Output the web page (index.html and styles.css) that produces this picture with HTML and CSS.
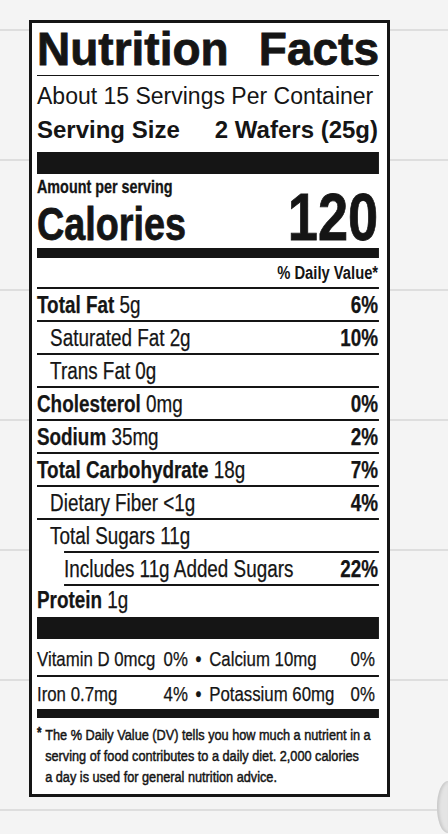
FILE: index.html
```html
<!DOCTYPE html>
<html lang="en">
<head>
    <meta charset="UTF-8">
    <meta name="viewport" content="width=device-width, initial-scale=1.0">
    <title>Nutrition Facts</title>
    <link rel="stylesheet" href="styles.css">
</head>
<body>
    <div class="label">
        <h1 class="title">Nutrition Facts</h1>
        <div class="servings">About 15 Servings Per Container</div>
        <div class="serving-size">
            <span>Serving Size</span>
            <span>2 Wafers (25g)</span>
        </div>

        <!-- condensed part of the label -->
        <div class="facts">
            <div class="bar bar-thick"></div>

            <div class="cal-block">
                <div class="cal-left">
                    <div class="amount">Amount per serving</div>
                    <div class="cal-label">Calories</div>
                </div>
                <div class="cal-value">120</div>
            </div>
            <div class="bar bar-medium"></div>

            <div class="dv-head">% Daily Value*</div>

            <div class="row"><span><b>Total Fat</b> 5g</span><b>6%</b></div>
            <div class="row sub"><span>Saturated Fat 2g</span><b>10%</b></div>
            <div class="row sub"><span>Trans Fat 0g</span></div>
            <div class="row"><span><b>Cholesterol</b> 0mg</span><b>0%</b></div>
            <div class="row"><span><b>Sodium</b> 35mg</span><b>2%</b></div>
            <div class="row"><span><b>Total Carbohydrate</b> 18g</span><b>7%</b></div>
            <div class="row sub"><span>Dietary Fiber &lt;1g</span><b>4%</b></div>
            <div class="row sub no-line"><span>Total Sugars 11g</span></div>
            <div class="row added"><span>Includes 11g Added Sugars</span><b>22%</b></div>
            <div class="row protein"><span><b>Protein</b> 1g</span></div>
            <div class="bar bar-thick"></div>

            <div class="vit-row first">
                <div class="vit-cell vit-left"><span>Vitamin D 0mcg</span><span>0%</span></div>
                <span class="dot">&bull;</span>
                <div class="vit-cell"><span>Calcium 10mg</span><span>0%</span></div>
            </div>
            <div class="vit-row">
                <div class="vit-cell vit-left"><span>Iron 0.7mg</span><span>4%</span></div>
                <span class="dot">&bull;</span>
                <div class="vit-cell"><span>Potassium 60mg</span><span>0%</span></div>
            </div>
            <div class="bar bar-medium bar-last"></div>

            <p class="footnote"><span class="star">*</span>The % Daily Value (DV) tells you how much a nutrient in a<br>serving of food contributes to a daily diet. 2,000 calories<br>a day is used for general nutrition advice.</p>
        </div>
    </div>

    <div class="knob"></div>
</body>
</html>
```

FILE: styles.css
```css
body {
    margin: 0;
    height: 834px;
    position: relative;
    overflow: hidden;
    background-color: #f4f4f4;
    background-image: repeating-linear-gradient(to bottom, transparent 0 29px, #dedede 29px 31px, transparent 31px 130px);
    font-family: "Liberation Sans", Arial, sans-serif;
    color: #151515;
}
.label {
    width: 361px;
    box-sizing: border-box;
    margin: 20px 0 0 29px;
    padding: 0 8px 7px 5px;
    background-color: #fff;
    border: 3px solid #151515;
}
.title {
    margin: 0;
    font-size: 46px;
    line-height: 52px;
    font-weight: bold;
    -webkit-text-stroke: 0.8px #151515;
    text-align: justify;
    text-align-last: justify;
    border-bottom: 1px solid #151515;
}
.servings {
    padding-top: 3px;
    font-size: 23px;
    line-height: 34px;
}
.serving-size {
    display: flex;
    justify-content: space-between;
    font-size: 24px;
    line-height: 34px;
    font-weight: bold;
    padding-right: 1px;
}

/* no narrow face installed, so this block is squeezed to a condensed width */
.facts {
    width: 417px;
    margin-right: -75px;
    transform: scaleX(0.82);
    transform-origin: 0 0;
}
.bar {
    background-color: #151515;
}
.bar-thick {
    height: 22px;
    margin-top: 5px;
}
.bar-medium {
    height: 10px;
    margin-top: 1px;
}

.cal-block {
    display: flex;
    justify-content: space-between;
    align-items: flex-end;
}
.amount {
    font-size: 17.5px;
    line-height: 27px;
    font-weight: bold;
    -webkit-text-stroke: 0.3px #151515;
}
.cal-label {
    font-size: 46px;
    line-height: 46px;
    font-weight: bold;
    -webkit-text-stroke: 0.8px #151515;
}
.cal-value {
    font-size: 66px;
    line-height: 60px;
    font-weight: bold;
    -webkit-text-stroke: 0.8px #151515;
    padding-right: 1px;
}

.dv-head {
    text-align: right;
    font-size: 18px;
    line-height: 27px;
    font-weight: bold;
    padding: 2px 1px 0 0;
    border-bottom: 2px solid #151515;
}

.row {
    display: flex;
    justify-content: space-between;
    font-size: 23px;
    line-height: 30px;
    padding: 1px 1px 0 0;
    border-bottom: 2px solid #151515;
    -webkit-text-stroke: 0.25px #151515;
}
.row.sub {
    padding-left: 16px;
}
.row.no-line {
    border-bottom: none;
}
.row.added {
    margin-left: 33px;
    border-top: 2px solid #151515;
}
.row.protein {
    border-bottom: none;
    padding-top: 0;
    line-height: 29px;
}
.protein + .bar-thick {
    margin-top: 2px;
}

.vit-row {
    display: flex;
    font-size: 20.5px;
    line-height: 30px;
    padding: 2px 5px 0 0;
    -webkit-text-stroke: 0.25px #151515;
}
.vit-row.first {
    line-height: 32px;
    padding-top: 4px;
    border-bottom: 2px solid #151515;
}
.vit-cell {
    flex: 1;
    display: flex;
    justify-content: space-between;
}
.vit-cell.vit-left {
    flex: none;
    width: 184px;
}
.dot {
    width: 26px;
    text-align: center;
    font-weight: bold;
}
.bar-last {
    height: 9px;
    margin-top: 0;
}

.footnote {
    margin: 0;
    padding: 6px 0 0 10px;
    font-size: 15.5px;
    line-height: 21px;
    -webkit-text-stroke: 0.5px #151515;
    white-space: nowrap;
}
.star {
    display: inline-block;
    width: 10px;
    margin-left: -10px;
    font-size: 14px;
    line-height: 14px;
    font-weight: bold;
    vertical-align: top;
    padding-top: 1px;
}

.knob {
    position: absolute;
    right: 0;
    top: 781px;
    width: 11px;
    height: 52px;
    border-radius: 100% 0 0 100% / 50% 0 0 50%;
    background-color: #e4e4e4;
    box-shadow: inset 2px 0 3px #c8c8c8;
}
```
